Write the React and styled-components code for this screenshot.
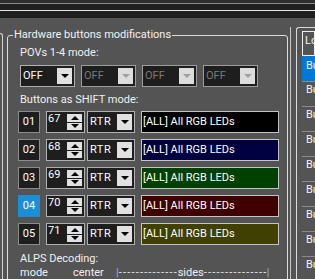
import React from "react";
import styled, { createGlobalStyle } from "styled-components";

const GlobalStyle = createGlobalStyle`
  html, body {
    margin: 0;
    padding: 0;
    background: #545454;
  }
  body {
    width: 315px;
    height: 279px;
    overflow: hidden;
    font-family: Roboto, "Liberation Sans", sans-serif;
    font-size: 11px;
    color: #f0f0f0;
  }
`;

const TitleStrip = styled.div`
  height: 18px;
  background: linear-gradient(
    to bottom,
    #2e2e2e 0 3px,
    #8c8c8c 3px 4px,
    #1f1f1f 4px 10px,
    #e6e6e6 10px 11px,
    #1f1f1f 11px 18px
  );
`;

const Body = styled.div`
  display: flex;
  align-items: flex-start;
`;

const LeftEdge = styled.div`
  box-sizing: border-box;
  width: 3px;
  height: 250px;
  margin-top: 15px;
  border-top: 1px solid #d4d4d4;
  border-right: 1px solid #d4d4d4;
  border-top-right-radius: 3px;
`;

const Group = styled.fieldset`
  box-sizing: border-box;
  width: 281px;
  height: 270px;
  min-width: 0;
  margin: 10px 0 0 4px;
  padding: 0;
  border: 1px solid #dcdcdc;
  border-radius: 3px;
`;

const Legend = styled.legend`
  margin-left: 5px;
  padding: 0 1px;
  line-height: 14px;
  color: #f2f2f2;
`;

const Content = styled.div`
  padding-left: 10px;
`;

const Label = styled.div`
  margin-top: ${(p) => p.$top}px;
  padding-left: 2px;
  line-height: 14px;
`;

const PovRow = styled.div`
  display: flex;
  gap: 6px;
  margin: 5px 0 0 2px;
`;

const Combo = styled.div`
  box-sizing: border-box;
  display: flex;
  width: ${(p) => p.$width}px;
  height: 22px;
  margin-left: ${(p) => p.$left || 0}px;
  padding: 2px;
  border: 1px solid ${(p) => (p.$disabled ? "#9c9c9c" : "#b0b0b0")};
  background: #1e1e1e;
`;

const ComboText = styled.span`
  flex: 1;
  line-height: 16px;
  color: ${(p) => (p.$disabled ? "#7a7a7a" : "#ffffff")};
  letter-spacing: ${(p) => p.$spacing || 0}px;
`;

const ComboButton = styled.span`
  display: flex;
  align-items: center;
  justify-content: center;
  width: 15px;
  background: ${(p) => (p.$disabled ? "#dcdcdc" : "#e1e1e1")};
`;

const ArrowDown = styled.span`
  width: 0;
  height: 0;
  border-left: 4px solid transparent;
  border-right: 4px solid transparent;
  border-top: 4px solid ${(p) => (p.$disabled ? "#a0a0a0" : "#000")};
`;

const ArrowUp = styled.span`
  width: 0;
  height: 0;
  border-left: 4px solid transparent;
  border-right: 4px solid transparent;
  border-bottom: 4px solid #000;
`;

const ShiftRows = styled.div`
  display: flex;
  flex-direction: column;
  gap: 6px;
  margin-top: 4px;
`;

const ShiftRow = styled.div`
  display: flex;
  height: 22px;
`;

const NumBox = styled.div`
  box-sizing: border-box;
  width: 22px;
  height: 22px;
  border: 1px solid ${(p) => (p.$active ? "#1b8fd6" : "#8c8c8c")};
  background: ${(p) => (p.$active ? "#1b8fd6" : "#1e1e1e")};
  color: #fff;
  text-align: center;
  line-height: 20px;
`;

const Spin = styled.div`
  box-sizing: border-box;
  display: flex;
  width: 39px;
  height: 22px;
  margin-left: 6px;
  padding: 0 2px 0 1px;
  border: 1px solid #b0b0b0;
  background: #1e1e1e;
`;

const SpinText = styled.span`
  flex: 1;
  line-height: 14px;
  color: #fff;
`;

const SpinButtons = styled.span`
  display: flex;
  flex-direction: column;
  gap: 1px;
  width: 15px;
  margin: 2px 0;
`;

const SpinHalf = styled.span`
  display: flex;
  flex: 1;
  align-items: center;
  justify-content: center;
  background: #e1e1e1;
`;

const ColorField = styled.div`
  box-sizing: border-box;
  width: 138px;
  height: 22px;
  margin-left: 6px;
  padding-left: 1px;
  border: 1px solid #c4c4c4;
  background: ${(p) => p.$bg};
  color: #fff;
  line-height: 20px;
  white-space: nowrap;
`;

const AlpsRow = styled.div`
  display: flex;
  padding-left: 2px;
  line-height: 14px;
  white-space: nowrap;
`;

const AlpsCell = styled.span`
  width: ${(p) => p.$width}px;
`;

const Range = styled.span`
  display: flex;
`;

const Pipe = styled.span`
  color: #8cb6ea;
`;

const DashFill = styled.span`
  width: ${(p) => p.$width}px;
  letter-spacing: 1.2px;
  color: #e8e8e8;
`;

const Splitter = styled.div`
  width: 1px;
  height: 252px;
  margin: 9px 0 0 2px;
  background: #c8c8c8;
`;

const SideGroup = styled.div`
  flex: 1;
  height: 260px;
  margin: 9px 0 0 5px;
  padding: 3px 0 0 5px;
  border-top: 1px solid #dcdcdc;
  border-left: 1px solid #dcdcdc;
  border-top-left-radius: 3px;
  overflow: hidden;
`;

const ListItem = styled.div`
  box-sizing: border-box;
  height: 25px;
  padding: ${(p) => (p.$focus ? "2px 2px" : p.$selected ? "3px 4px" : "1px 4px")};
  border: ${(p) => (p.$focus ? "1px solid #f0f0f0" : "none")};
  border-top: ${(p) =>
    p.$focus ? "1px solid #f0f0f0" : p.$selected ? "none" : "1px solid #8a8a8a"};
  background: ${(p) => (p.$selected ? "#0078d7" : "transparent")};
  color: #f4f4f4;
  line-height: 14px;
  white-space: nowrap;
`;

const povs = [
  { value: "OFF", disabled: false },
  { value: "OFF", disabled: true },
  { value: "OFF", disabled: true },
  { value: "OFF", disabled: true },
];

const shifts = [
  { id: "01", value: 67, color: "#000000" },
  { id: "02", value: 68, color: "#000040" },
  { id: "03", value: 69, color: "#004000" },
  { id: "04", value: 70, color: "#400000", active: true },
  { id: "05", value: 71, color: "#404000" },
];

const Dropdown = ({ value, width, left, disabled, spacing }) => (
  <Combo $width={width} $left={left} $disabled={disabled}>
    <ComboText $disabled={disabled} $spacing={spacing}>
      {value}
    </ComboText>
    <ComboButton $disabled={disabled}>
      <ArrowDown $disabled={disabled} />
    </ComboButton>
  </Combo>
);

const SpinBox = ({ value }) => (
  <Spin>
    <SpinText>{value}</SpinText>
    <SpinButtons>
      <SpinHalf>
        <ArrowUp />
      </SpinHalf>
      <SpinHalf>
        <ArrowDown />
      </SpinHalf>
    </SpinButtons>
  </Spin>
);

export default function App() {
  return (
    <>
      <GlobalStyle />
      <TitleStrip />
      <Body>
        <LeftEdge />
        <Group>
          <Legend>Hardware buttons modifications</Legend>
          <Content>
            <Label $top={4}>POVs 1-4 mode:</Label>
            <PovRow>
              {povs.map((p, i) => (
                <Dropdown key={i} value={p.value} width={55} disabled={p.disabled} />
              ))}
            </PovRow>
            <Label $top={6}>Buttons as SHIFT mode:</Label>
            <ShiftRows>
              {shifts.map((s) => (
                <ShiftRow key={s.id}>
                  <NumBox $active={s.active}>{s.id}</NumBox>
                  <SpinBox value={s.value} />
                  <Dropdown value="RTR" width={48} left={2} spacing={0.5} />
                  <ColorField $bg={s.color}>[ALL] All RGB LEDs</ColorField>
                </ShiftRow>
              ))}
            </ShiftRows>
            <Label $top={7}>ALPS Decoding:</Label>
            <AlpsRow>
              <AlpsCell $width={53}>mode</AlpsCell>
              <AlpsCell $width={43}>center</AlpsCell>
              <Range>
                <Pipe>|</Pipe>
                <DashFill $width={59}>{"-".repeat(14)}</DashFill>
                <span>sides</span>
                <DashFill $width={63}>{"-".repeat(15)}</DashFill>
                <Pipe>|</Pipe>
              </Range>
            </AlpsRow>
          </Content>
        </Group>
        <Splitter />
        <SideGroup>
          <ListItem $focus>Lo</ListItem>
          <ListItem $selected>Bu</ListItem>
          {Array.from({ length: 8 }).map((_, i) => (
            <ListItem key={i}>Bu</ListItem>
          ))}
        </SideGroup>
      </Body>
    </>
  );
}
